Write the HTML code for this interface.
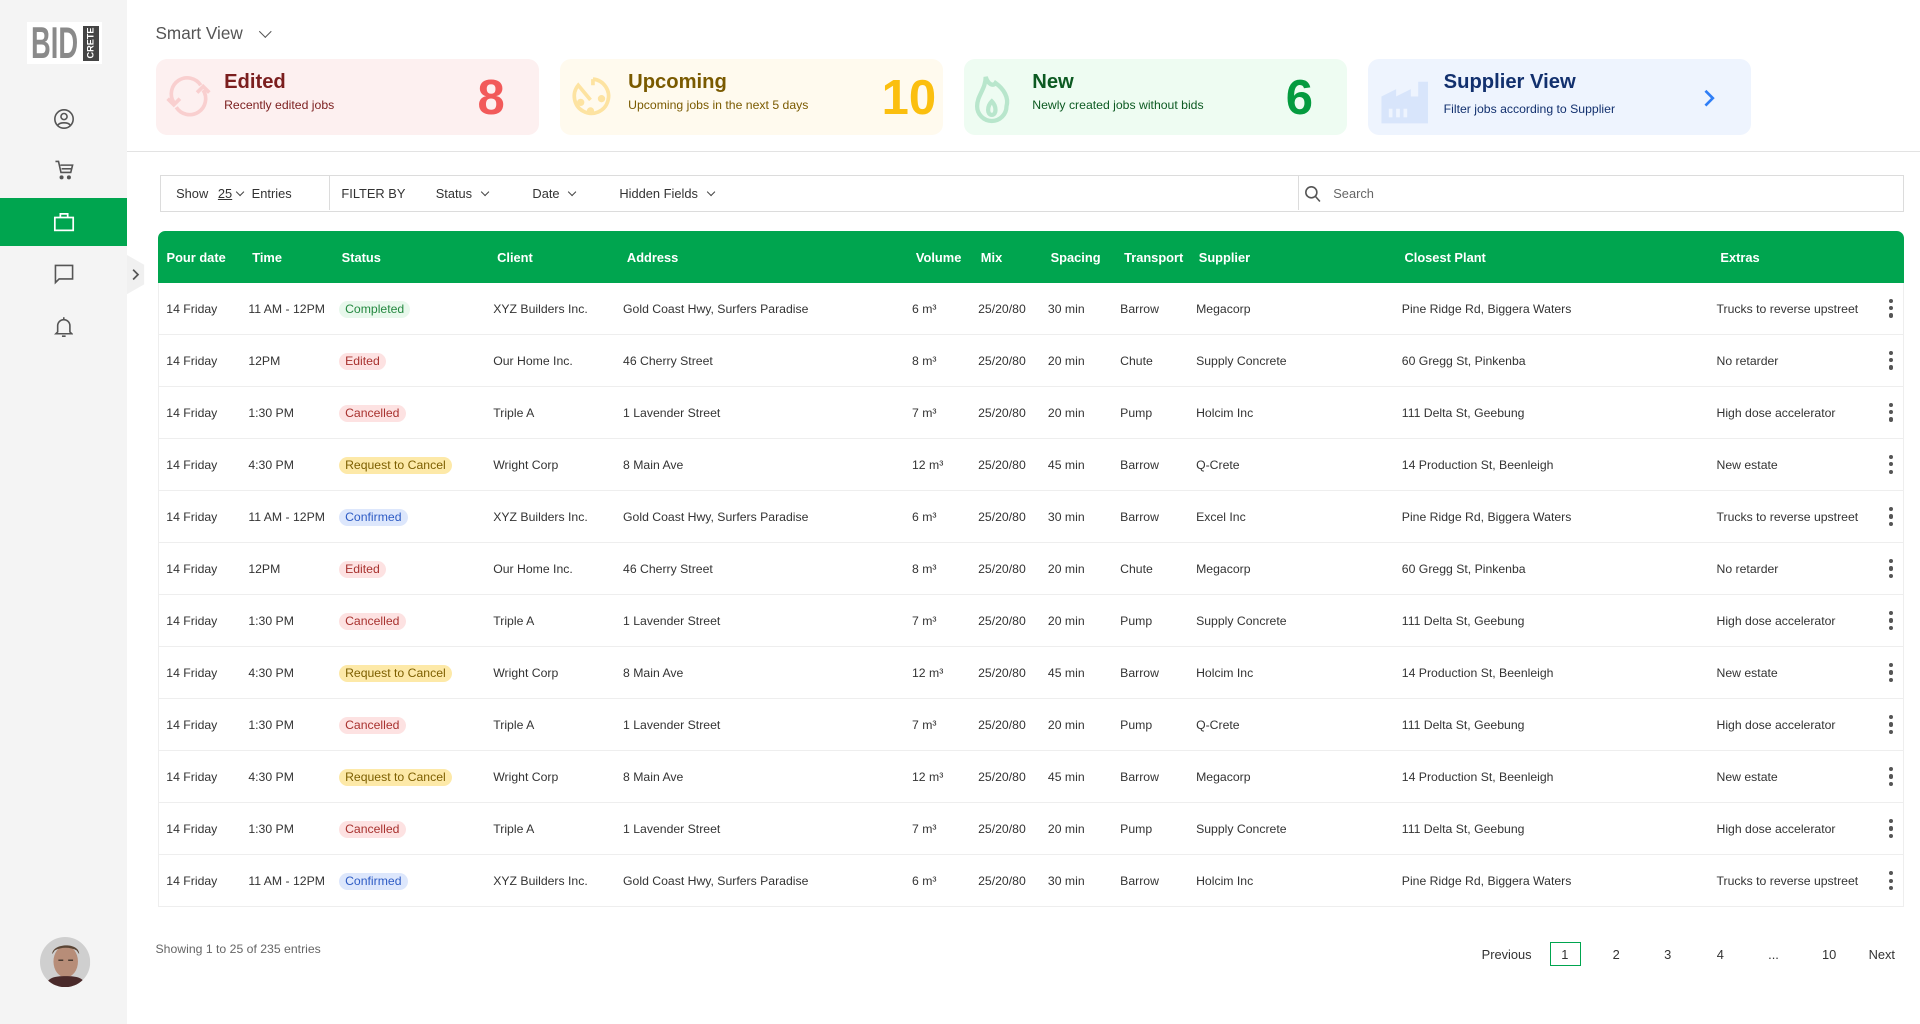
<!DOCTYPE html>
<html><head><meta charset="utf-8">
<style>
*{box-sizing:border-box;margin:0;padding:0}
html,body{width:1920px;height:1024px;overflow:hidden;background:#fff}
#w{zoom:1.22449;width:1568px;height:836px;position:relative;font-family:"Liberation Sans",Arial,sans-serif;color:#333;overflow:hidden}
.a{position:absolute;white-space:nowrap}
.sb{position:absolute;left:0;top:0;width:104px;height:836px;background:#f4f4f4}
.card{position:absolute;top:48px;height:62px;width:313px;border-radius:9px}
.ct{position:absolute;left:56px;top:10px;font-size:16.5px;font-weight:bold}
.cs{position:absolute;left:56px;top:32px;font-size:10px}
.cn{position:absolute;font-size:40px;font-weight:bold;top:9px}
.fb{position:absolute;left:131px;top:143px;width:1424px;height:30px;border:1px solid #dcdcdc;font-size:10.5px;color:#333}
.th{position:absolute;left:129px;top:189px;width:1426px;height:42px;background:#00a54f;border-radius:6px 6px 0 0}
.th span{position:absolute;top:15px;color:#fff;font-size:10.5px;font-weight:bold}
.tb{position:absolute;left:129px;top:231px;width:1426px;height:510px;border:1px solid #eee;border-top:none}
.r{position:absolute;left:0;width:1424px;height:42.5px;border-bottom:1px solid #eee;font-size:10px;color:#333}
.r span{position:absolute;top:15.5px}
.r .bd{top:14.5px;padding:1px 5px;border-radius:7px;font-size:10px;line-height:12px}
.Completed{background:#e8f8ec;color:#23883f}
.Edited,.Cancelled{background:#fde2e2;color:#a8322f}
.Req{background:#fde9a8;color:#7d5f00}
.Confirmed{background:#dde7fc;color:#2d5bc4}
.k{position:absolute;left:1413px;top:13px;width:4px}
.k i{display:block;width:3.5px;height:3.5px;border-radius:50%;background:#555;margin-bottom:2.5px}
.chev{display:inline-block;width:6px;height:6px;border-right:1.4px solid #444;border-bottom:1.4px solid #444;transform:rotate(45deg);margin-left:6px;position:relative;top:-2px}
.pg{position:absolute;top:773px;font-size:10.5px;color:#333}
</style></head><body><div id="w">
<div class="sb">
 <div class="a" style="left:22px;top:18px;width:61px;height:34px;background:#fff"></div>
 <div class="a" style="left:25px;top:18px;font-size:36px;font-weight:bold;color:#8a8a8a;letter-spacing:0px;line-height:36px;transform:scaleX(0.62);transform-origin:left">BID</div>
 <div class="a" style="left:68px;top:21px;width:13px;height:29px;background:#444"></div>
 <div class="a" style="left:61px;top:31px;font-size:7.5px;font-weight:bold;color:#fff;transform:rotate(-90deg)">CRETE</div>
 <svg class="a" style="left:43px;top:88px" width="18" height="18" viewBox="0 0 18 18" fill="none" stroke="#555" stroke-width="1.3"><circle cx="9" cy="9" r="7.5"/><circle cx="9" cy="7" r="2.5"/><path d="M4 14c1.5-2.5 8.5-2.5 10 0"/></svg>
 <svg class="a" style="left:43px;top:130px" width="18" height="18" viewBox="0 0 18 18" fill="none" stroke="#555" stroke-width="1.3"><path d="M2 2h2.5l2 9h8l1.5-6H6"/><path d="M7 8h8"/><circle cx="7" cy="15" r="1" fill="#555"/><circle cx="13" cy="15" r="1" fill="#555"/></svg>
 <div class="a" style="left:0;top:162px;width:104px;height:39px;background:#00a54f"></div>
 <svg class="a" style="left:43px;top:173px" width="18" height="17" viewBox="0 0 18 17" fill="none" stroke="#fff" stroke-width="1.4"><rect x="1.5" y="4.5" width="15" height="10.5"/><path d="M6 4.5V1.5h6v3"/></svg>
 <svg class="a" style="left:43px;top:215px" width="18" height="18" viewBox="0 0 18 18" fill="none" stroke="#555" stroke-width="1.3"><path d="M2 2h14v11H5l-3 3z"/></svg>
 <svg class="a" style="left:44px;top:258px" width="16" height="18" viewBox="0 0 16 18" fill="none" stroke="#555" stroke-width="1.3"><path d="M3 13V8a5 5 0 0 1 10 0v5l1.5 1.5h-13zM8 1v2M6.5 16.5h3"/></svg>
 <svg class="a" style="left:104px;top:208px" width="16" height="32" viewBox="0 0 16 32"><path d="M0 0l14 8v16L0 32z" fill="#f0f0f0"/><path d="M5 12l4 4-4 4" fill="none" stroke="#555" stroke-width="1.4"/></svg>
 <svg class="a" style="left:33px;top:765px" width="41" height="41" viewBox="0 0 41 41"><defs><clipPath id="c"><circle cx="20.5" cy="20.5" r="20.5"/></clipPath></defs><g clip-path="url(#c)"><rect width="41" height="41" fill="#cfcfcf"/><ellipse cx="21" cy="20" rx="10" ry="13" fill="#b78d78"/><path d="M10 14c0-9 22-10 22 0l-2-3c-5-3-13-3-18 0z" fill="#5a4535"/><path d="M4 41c2-8 8-9 17-9s15 1 17 9z" fill="#4a2a2a"/><path d="M15 19h4M23 19h4" stroke="#4a3a30" stroke-width="1.2"/></g></svg>
</div>

<div class="a" style="left:127px;top:19px;font-size:14px;color:#555">Smart View</div>
<div class="a" style="left:207px;top:17px"><span class="chev" style="border-color:#555;width:7px;height:7px"></span></div>

<div class="card" style="left:127px;background:#fdf0f0">
 <svg class="a" style="left:7px;top:12px" width="40" height="38" viewBox="0 0 40 38" fill="none" stroke="#f9cfcf" stroke-width="3"><path d="M8 24A12 12 0 0 1 30 10M32 14A12 12 0 0 1 10 28"/><path d="M3 21l5 5 5-5M27 16l5-5 5 5"/></svg>
 <div class="ct" style="color:#7b1e1e">Edited</div><div class="cs" style="color:#7b1e1e">Recently edited jobs</div>
 <div class="cn" style="left:263px;color:#f25a5a">8</div>
</div>
<div class="card" style="left:457px;background:#fffaee">
 <svg class="a" style="left:5px;top:12px" width="40" height="40" viewBox="0 0 40 40" fill="none" stroke="#fde3a1" stroke-width="3"><path d="M22 5A14 14 0 1 1 10 10l10 12"/><path d="M22 5v5" /><circle cx="12" cy="24" r="1.5" fill="#fde3a1"/><circle cx="20" cy="31" r="1.5" fill="#fde3a1"/><circle cx="29" cy="21" r="1.5" fill="#fde3a1"/></svg>
 <div class="ct" style="color:#7a5a00">Upcoming</div><div class="cs" style="color:#7a5a00">Upcoming jobs in the next 5 days</div>
 <div class="cn" style="left:263px;color:#fbbf0f">10</div>
</div>
<div class="card" style="left:787px;background:#eefcf2">
 <svg class="a" style="left:6px;top:11px" width="34" height="42" viewBox="0 0 34 42" fill="none" stroke="#b8e6cc" stroke-width="3.5"><path d="M12 4c2 6 6 8 8 5 7 5 11 12 9 19a12 12 0 0 1-24 0c0-9 7-14 7-24z"/><path d="M17 24c-4 4-4 11 0 11s4-7 0-11z"/></svg>
 <div class="ct" style="color:#0c5a22">New</div><div class="cs" style="color:#0c5a22">Newly created jobs without bids</div>
 <div class="cn" style="left:263px;color:#049b3f">6</div>
</div>
<div class="card" style="left:1117px;background:#eef4fe">
 <svg class="a" style="left:9px;top:11px" width="44" height="42" viewBox="0 0 44 42"><path d="M2 42V20l12-6v6l12-6v6h6V8h8v34z" fill="#d8e5fb"/><rect x="8" y="30" width="3" height="7" fill="#eef4fe"/><rect x="14" y="30" width="3" height="7" fill="#eef4fe"/><rect x="20" y="30" width="3" height="7" fill="#eef4fe"/></svg>
 <div class="ct" style="left:62px;color:#12306e">Supplier View</div><div class="cs" style="left:62px;top:35px;color:#12306e">Filter jobs according to Supplier</div>
 <svg class="a" style="left:274px;top:25px" width="10" height="15" viewBox="0 0 10 15" fill="none" stroke="#2f7ef6" stroke-width="2.2"><path d="M2 1.5l6 6-6 6"/></svg>
</div>
<div class="a" style="left:104px;top:123px;width:1464px;height:1px;background:#e3e3e3"></div>

<div class="fb">
 <div class="a" style="left:12px;top:8px">Show <span style="margin-left:5px;text-decoration:underline">25</span><span class="chev" style="margin-left:4px;width:5px;height:5px"></span> <span style="margin-left:4px">Entries</span></div>
 <div class="a" style="left:137px;top:0;width:1px;height:28px;background:#dcdcdc"></div>
 <div class="a" style="left:147px;top:8px">FILTER BY</div>
 <div class="a" style="left:224px;top:8px">Status<span class="chev" style="margin-left:8px;width:5px;height:5px"></span></div>
 <div class="a" style="left:303px;top:8px">Date<span class="chev" style="margin-left:8px;width:5px;height:5px"></span></div>
 <div class="a" style="left:374px;top:8px">Hidden Fields<span class="chev" style="margin-left:8px;width:5px;height:5px"></span></div>
 <div class="a" style="left:928px;top:0;width:1px;height:28px;background:#dcdcdc"></div>
 <svg class="a" style="left:933px;top:7px" width="14" height="15" viewBox="0 0 14 15" fill="none" stroke="#555" stroke-width="1.3"><circle cx="6" cy="6" r="4.5"/><path d="M9.5 9.5l3.5 4"/></svg>
 <div class="a" style="left:957px;top:8px;color:#666">Search</div>
</div>

<div class="th">
<span style="left:7px">Pour date</span><span style="left:77px">Time</span><span style="left:150px">Status</span><span style="left:277px">Client</span><span style="left:383px">Address</span><span style="left:619px">Volume</span><span style="left:672px">Mix</span><span style="left:729px">Spacing</span><span style="left:789px">Transport</span><span style="left:850px">Supplier</span><span style="left:1018px">Closest Plant</span><span style="left:1276px">Extras</span>
</div>
<div class="tb">
<div class="r" style="top:0"><span style="left:6px">14 Friday</span><span style="left:73px">11 AM - 12PM</span><span class="bd Completed" style="left:147px">Completed</span><span style="left:273px">XYZ Builders Inc.</span><span style="left:379px">Gold Coast Hwy, Surfers Paradise</span><span style="left:615px">6 m³</span><span style="left:669px">25/20/80</span><span style="left:726px">30 min</span><span style="left:785px">Barrow</span><span style="left:847px">Megacorp</span><span style="left:1015px">Pine Ridge Rd, Biggera Waters</span><span style="left:1272px">Trucks to reverse upstreet</span><div class="k"><i></i><i></i><i></i></div></div>
<div class="r" style="top:42.5px"><span style="left:6px">14 Friday</span><span style="left:73px">12PM</span><span class="bd Edited" style="left:147px">Edited</span><span style="left:273px">Our Home Inc.</span><span style="left:379px">46 Cherry Street</span><span style="left:615px">8 m³</span><span style="left:669px">25/20/80</span><span style="left:726px">20 min</span><span style="left:785px">Chute</span><span style="left:847px">Supply Concrete</span><span style="left:1015px">60 Gregg St, Pinkenba</span><span style="left:1272px">No retarder</span><div class="k"><i></i><i></i><i></i></div></div>
<div class="r" style="top:85px"><span style="left:6px">14 Friday</span><span style="left:73px">1:30 PM</span><span class="bd Cancelled" style="left:147px">Cancelled</span><span style="left:273px">Triple A</span><span style="left:379px">1 Lavender Street</span><span style="left:615px">7 m³</span><span style="left:669px">25/20/80</span><span style="left:726px">20 min</span><span style="left:785px">Pump</span><span style="left:847px">Holcim Inc</span><span style="left:1015px">111 Delta St, Geebung</span><span style="left:1272px">High dose accelerator</span><div class="k"><i></i><i></i><i></i></div></div>
<div class="r" style="top:127.5px"><span style="left:6px">14 Friday</span><span style="left:73px">4:30 PM</span><span class="bd Req" style="left:147px">Request to Cancel</span><span style="left:273px">Wright Corp</span><span style="left:379px">8 Main Ave</span><span style="left:615px">12 m³</span><span style="left:669px">25/20/80</span><span style="left:726px">45 min</span><span style="left:785px">Barrow</span><span style="left:847px">Q-Crete</span><span style="left:1015px">14 Production St, Beenleigh</span><span style="left:1272px">New estate</span><div class="k"><i></i><i></i><i></i></div></div>
<div class="r" style="top:170px"><span style="left:6px">14 Friday</span><span style="left:73px">11 AM - 12PM</span><span class="bd Confirmed" style="left:147px">Confirmed</span><span style="left:273px">XYZ Builders Inc.</span><span style="left:379px">Gold Coast Hwy, Surfers Paradise</span><span style="left:615px">6 m³</span><span style="left:669px">25/20/80</span><span style="left:726px">30 min</span><span style="left:785px">Barrow</span><span style="left:847px">Excel Inc</span><span style="left:1015px">Pine Ridge Rd, Biggera Waters</span><span style="left:1272px">Trucks to reverse upstreet</span><div class="k"><i></i><i></i><i></i></div></div>
<div class="r" style="top:212.5px"><span style="left:6px">14 Friday</span><span style="left:73px">12PM</span><span class="bd Edited" style="left:147px">Edited</span><span style="left:273px">Our Home Inc.</span><span style="left:379px">46 Cherry Street</span><span style="left:615px">8 m³</span><span style="left:669px">25/20/80</span><span style="left:726px">20 min</span><span style="left:785px">Chute</span><span style="left:847px">Megacorp</span><span style="left:1015px">60 Gregg St, Pinkenba</span><span style="left:1272px">No retarder</span><div class="k"><i></i><i></i><i></i></div></div>
<div class="r" style="top:255px"><span style="left:6px">14 Friday</span><span style="left:73px">1:30 PM</span><span class="bd Cancelled" style="left:147px">Cancelled</span><span style="left:273px">Triple A</span><span style="left:379px">1 Lavender Street</span><span style="left:615px">7 m³</span><span style="left:669px">25/20/80</span><span style="left:726px">20 min</span><span style="left:785px">Pump</span><span style="left:847px">Supply Concrete</span><span style="left:1015px">111 Delta St, Geebung</span><span style="left:1272px">High dose accelerator</span><div class="k"><i></i><i></i><i></i></div></div>
<div class="r" style="top:297.5px"><span style="left:6px">14 Friday</span><span style="left:73px">4:30 PM</span><span class="bd Req" style="left:147px">Request to Cancel</span><span style="left:273px">Wright Corp</span><span style="left:379px">8 Main Ave</span><span style="left:615px">12 m³</span><span style="left:669px">25/20/80</span><span style="left:726px">45 min</span><span style="left:785px">Barrow</span><span style="left:847px">Holcim Inc</span><span style="left:1015px">14 Production St, Beenleigh</span><span style="left:1272px">New estate</span><div class="k"><i></i><i></i><i></i></div></div>
<div class="r" style="top:340px"><span style="left:6px">14 Friday</span><span style="left:73px">1:30 PM</span><span class="bd Cancelled" style="left:147px">Cancelled</span><span style="left:273px">Triple A</span><span style="left:379px">1 Lavender Street</span><span style="left:615px">7 m³</span><span style="left:669px">25/20/80</span><span style="left:726px">20 min</span><span style="left:785px">Pump</span><span style="left:847px">Q-Crete</span><span style="left:1015px">111 Delta St, Geebung</span><span style="left:1272px">High dose accelerator</span><div class="k"><i></i><i></i><i></i></div></div>
<div class="r" style="top:382.5px"><span style="left:6px">14 Friday</span><span style="left:73px">4:30 PM</span><span class="bd Req" style="left:147px">Request to Cancel</span><span style="left:273px">Wright Corp</span><span style="left:379px">8 Main Ave</span><span style="left:615px">12 m³</span><span style="left:669px">25/20/80</span><span style="left:726px">45 min</span><span style="left:785px">Barrow</span><span style="left:847px">Megacorp</span><span style="left:1015px">14 Production St, Beenleigh</span><span style="left:1272px">New estate</span><div class="k"><i></i><i></i><i></i></div></div>
<div class="r" style="top:425px"><span style="left:6px">14 Friday</span><span style="left:73px">1:30 PM</span><span class="bd Cancelled" style="left:147px">Cancelled</span><span style="left:273px">Triple A</span><span style="left:379px">1 Lavender Street</span><span style="left:615px">7 m³</span><span style="left:669px">25/20/80</span><span style="left:726px">20 min</span><span style="left:785px">Pump</span><span style="left:847px">Supply Concrete</span><span style="left:1015px">111 Delta St, Geebung</span><span style="left:1272px">High dose accelerator</span><div class="k"><i></i><i></i><i></i></div></div>
<div class="r" style="top:467.5px;border-bottom:none"><span style="left:6px">14 Friday</span><span style="left:73px">11 AM - 12PM</span><span class="bd Confirmed" style="left:147px">Confirmed</span><span style="left:273px">XYZ Builders Inc.</span><span style="left:379px">Gold Coast Hwy, Surfers Paradise</span><span style="left:615px">6 m³</span><span style="left:669px">25/20/80</span><span style="left:726px">30 min</span><span style="left:785px">Barrow</span><span style="left:847px">Holcim Inc</span><span style="left:1015px">Pine Ridge Rd, Biggera Waters</span><span style="left:1272px">Trucks to reverse upstreet</span><div class="k"><i></i><i></i><i></i></div></div>
</div>

<div class="a" style="left:127px;top:769px;font-size:10px;color:#666">Showing 1 to 25 of 235 entries</div>
<div class="pg" style="left:1210px">Previous</div>
<div class="a" style="left:1266px;top:769px;width:25px;height:20px;border:1px solid #00a54f"></div>
<div class="pg" style="left:1275px">1</div>
<div class="pg" style="left:1317px">2</div>
<div class="pg" style="left:1359px">3</div>
<div class="pg" style="left:1402px">4</div>
<div class="pg" style="left:1444px">...</div>
<div class="pg" style="left:1488px">10</div>
<div class="pg" style="left:1526px">Next</div>
</div></body></html>
